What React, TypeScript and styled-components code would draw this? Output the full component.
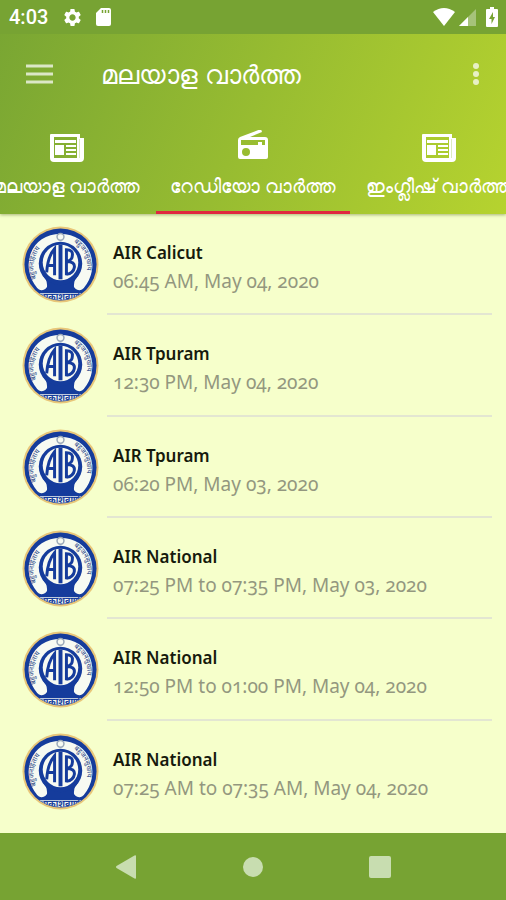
import React from "react";
import styled, { createGlobalStyle } from "styled-components";
import { MdSettings } from "react-icons/md";

const GlobalStyle = createGlobalStyle`
  * { box-sizing: border-box; }
  html, body, #root { height: 100%; }
  body { margin: 0; background: #f6ffcb; font-family: "Noto Sans", sans-serif; }
  button { font: inherit; border: 0; padding: 0; background: none; color: inherit; cursor: pointer; }
`;

const Screen = styled.div`
  display: flex;
  flex-direction: column;
  min-height: 100vh;
  overflow: hidden;
`;

const Header = styled.header`
  position: relative;
  background: linear-gradient(114deg, #78a533 0%, #b6d32f 100%);
  color: #fff;
  box-shadow: 0 1px 3px rgba(70, 90, 20, 0.45);
`;

const StatusBar = styled.div`
  display: flex;
  align-items: center;
  height: 34px;
  padding: 0 8px 0 9px;
  background: #77a333;
  font: 500 20px/36px Roboto, sans-serif;
`;

const StatusGroup = styled.div<{ $end?: boolean }>`
  display: flex;
  align-items: center;
  gap: ${(p) => (p.$end ? 4 : 13)}px;
  margin-left: ${(p) => (p.$end ? "auto" : "14px")};
`;

const Battery = styled.svg`
  margin-left: 6px;
`;

const Toolbar = styled.div`
  display: flex;
  align-items: center;
  height: 80px;
  padding: 0 22px 0 26px;
`;

const IconButton = styled.button`
  display: flex;
  opacity: 0.72;
`;

const Title = styled.h1`
  flex: 1;
  margin: 0 0 0 48px;
  font-size: 26px;
  line-height: 32px;
  font-weight: 400;
  white-space: nowrap;
`;

const Tabs = styled.nav`
  display: flex;
  justify-content: center;
  height: 100px;
  overflow: hidden;
`;

const Tab = styled.button<{ $active?: boolean }>`
  display: flex;
  flex-direction: column;
  align-items: center;
  flex: none;
  width: ${(p) => (p.$active ? 194 : 178)}px;
  border-bottom: 3px solid ${(p) => (p.$active ? "#e0283f" : "transparent")};
`;

const TabIcon = styled.span`
  display: flex;
  align-items: flex-end;
  height: 48px;
`;

const TabLabel = styled.span`
  margin-top: 12px;
  font-size: 19px;
  line-height: 24px;
  white-space: nowrap;
`;

const List = styled.ul`
  flex: 1;
  display: grid;
  grid-auto-rows: 1fr;
  margin: 0;
  padding: 0 14px 11px 22px;
  list-style: none;
  background: #f6ffcb;
`;

const Row = styled.li`
  display: flex;
  align-items: stretch;
  gap: 8px;

  &:last-child > div { border-color: transparent; }
`;

const Logo = styled.svg`
  flex: none;
  align-self: center;
`;

const Details = styled.div`
  flex: 1;
  padding: 25px 0 0 6px;
  border-bottom: 2px solid #e3e6d2;
`;

const Station = styled.div`
  font-size: 17px;
  line-height: 28px;
  font-weight: 600;
  color: #161a0d;
`;

const Time = styled.div`
  font-size: 19px;
  line-height: 28px;
  font-variant-numeric: oldstyle-nums;
  color: #93977f;
`;

const NavBar = styled.nav`
  display: flex;
  justify-content: center;
  align-items: center;
  gap: 92px;
  height: 67px;
  background: #77a333;
  color: #c8ddb0;
`;

const NavButton = styled.button`
  display: flex;
  justify-content: center;
  width: 35px;
`;

const NewsIcon = () => (
  <svg width="35" height="28" viewBox="0 0 35 28" aria-hidden="true">
    <path
      fill="#fff"
      fillRule="evenodd"
      d="M1 0H30V4H34V24Q34 28 30 28H4Q0 28 0 24V1Q0 0 1 0ZM4 3V24H27V3ZM5 6H26V9H5ZM5 11H14V21H5ZM16 11H26V13H16ZM16 15H26V17H16ZM16 19H26V21H16Z"
    />
    <path d="M29.500 5V24" stroke="#dcebc0" />
  </svg>
);

const RadioIcon = () => (
  <svg width="30" height="32" viewBox="0 0 30 32" aria-hidden="true">
    <path
      fill="#fff"
      fillRule="evenodd"
      d="M0 10Q0 8 2 7L23 -1L24 2L12 7H27Q30 7 30 10V27Q30 29 28 29H2Q0 29 0 27ZM3 10V15H20V12H24V15H27V10ZM8 18A4 4 0 1 0 8 26A4 4 0 1 0 8 18Z"
    />
  </svg>
);

const SignalIcons = () => (
  <>
    <svg width="22" height="18" viewBox="0 0 22 18" aria-hidden="true">
      <path fill="#fff" d="M0 4Q11 -4 22 4L11 18Z" />
    </svg>
    <svg width="17" height="17" viewBox="0 0 17 17" aria-hidden="true">
      <path fill="#fff" fillOpacity=".35" d="M17 0V17H0Z" />
      <path fill="#fff" d="M9 8V17H0Z" />
    </svg>
    <Battery width="12" height="20" viewBox="0 0 12 20" aria-hidden="true">
      <path fill="#fff" fillRule="evenodd" d="M4 0H8V2H11Q12 2 12 3V19Q12 20 11 20H1Q0 20 0 19V3Q0 2 1 2H4ZM7 5L3 12H5.500V17L9 10H7Z" />
    </Battery>
  </>
);

const AirLogo = ({ id }: { id: number }) => (
  <Logo width="77" height="77" viewBox="0 0 78 78" role="img" aria-label="AIR">
    <defs>
      <clipPath id={`disc${id}`}><circle cx="39" cy="39" r="36" /></clipPath>
      <path id={`left${id}`} d="M18 58A28 28 0 0 1 31 14" />
      <path id={`right${id}`} d="M47 14A28 28 0 0 1 60 58" />
    </defs>
    <circle cx="39" cy="39" r="38.500" fill="#e8c679" />
    <circle cx="39" cy="39" r="36.500" fill="#153c9c" />
    <g clipPath={`url(#disc${id})`}>
      <path d="M20 59C5 41 14 14 39 14C64 14 73 41 58 59" fill="none" stroke="#f7faf2" strokeWidth="12" strokeLinecap="round" />
      <path d="M0 68H78V78H0Z" fill="#f7faf2" />
      <text x="39" y="75" textAnchor="middle" fontSize="9" fontWeight="700" fill="#153c9c">आकाशवाणी</text>
    </g>
    <path d="M25 66Q27 55 21 48H57Q51 55 53 66Z" fill="#153c9c" />
    <circle cx="39" cy="38" r="22" fill="#153c9c" />
    <circle cx="39" cy="37" r="18" fill="#f7faf2" />
    <circle cx="39" cy="11" r="3.500" fill="#f7faf2" stroke="#9aa8b8" strokeWidth="1.500" />
    <g fontSize="7" fill="#263f86">
      <text><textPath href={`#left${id}`} startOffset="6">बहुजनहिताय</textPath></text>
      <text><textPath href={`#right${id}`} startOffset="6">बहुजनसुखाय</textPath></text>
    </g>
    <g fill="none" stroke="#153c9c" strokeWidth="3">
      <path d="M25 47Q26 31 33 23V50M26 40H33" />
      <path d="M39 19V54" strokeWidth="4" />
      <path d="M45 50V24Q52 24 51 30Q51 35 45 36Q54 36 53 42Q52 48 45 49" />
    </g>
  </Logo>
);

const tabs = [
  { label: "മലയാള വാർത്ത", icon: <NewsIcon /> },
  { label: "റേഡിയോ വാർത്ത", icon: <RadioIcon />, active: true },
  { label: "ഇംഗ്ലീഷ് വാർത്ത", icon: <NewsIcon /> },
];

const bulletins = [
  { station: "AIR Calicut", time: "06:45 AM, May 04, 2020" },
  { station: "AIR Tpuram", time: "12:30 PM, May 04, 2020" },
  { station: "AIR Tpuram", time: "06:20 PM, May 03, 2020" },
  { station: "AIR National", time: "07:25 PM to 07:35 PM, May 03, 2020" },
  { station: "AIR National", time: "12:50 PM to 01:00 PM, May 04, 2020" },
  { station: "AIR National", time: "07:25 AM to 07:35 AM, May 04, 2020" },
];

export default function App() {
  return (
    <Screen>
      <GlobalStyle />
      <Header>
        <StatusBar>
          <span>4:03</span>
          <StatusGroup>
            <MdSettings size={21} />
            <svg width="15" height="18" viewBox="0 0 15 18" aria-hidden="true">
              <path fill="#fff" d="M5 0H13Q15 0 15 2V16Q15 18 13 18H2Q0 18 0 16V5Z" />
              <path d="M6.500 2V5M9.500 2V5M12.500 2V5" stroke="#77a333" strokeWidth="1.500" />
            </svg>
          </StatusGroup>
          <StatusGroup $end>
            <SignalIcons />
          </StatusGroup>
        </StatusBar>
        <Toolbar>
          <IconButton aria-label="Menu">
            <svg width="27" height="20" viewBox="0 0 27 20">
              <path d="M0 2H27M0 10H27M0 18H27" stroke="#fff" strokeWidth="3" />
            </svg>
          </IconButton>
          <Title>മലയാള വാർത്ത</Title>
          <IconButton aria-label="More options">
            <svg width="16" height="24" viewBox="0 0 16 24" fill="#fff">
              <circle cx="8" cy="4" r="3" />
              <circle cx="8" cy="12" r="3" />
              <circle cx="8" cy="20" r="3" />
            </svg>
          </IconButton>
        </Toolbar>
        <Tabs>
          {tabs.map((t) => (
            <Tab key={t.label} $active={t.active}>
              <TabIcon>{t.icon}</TabIcon>
              <TabLabel>{t.label}</TabLabel>
            </Tab>
          ))}
        </Tabs>
      </Header>
      <List>
        {bulletins.map((b, i) => (
          <Row key={i}>
            <AirLogo id={i} />
            <Details>
              <Station>{b.station}</Station>
              <Time>{b.time}</Time>
            </Details>
          </Row>
        ))}
      </List>
      <NavBar>
        <NavButton aria-label="Back">
          <svg width="20" height="24" viewBox="0 0 20 24" fill="currentColor">
            <path d="M18.500 .5Q20 0 20 1V23Q20 24 18.500 23.500L.5 13Q-.5 12 .5 11Z" />
          </svg>
        </NavButton>
        <NavButton aria-label="Home">
          <svg width="20" height="20" viewBox="0 0 20 20" fill="currentColor">
            <circle cx="10" cy="10" r="10" />
          </svg>
        </NavButton>
        <NavButton aria-label="Recent apps">
          <svg width="22" height="22" viewBox="0 0 22 22" fill="currentColor">
            <rect width="22" height="22" rx="2" />
          </svg>
        </NavButton>
      </NavBar>
    </Screen>
  );
}
